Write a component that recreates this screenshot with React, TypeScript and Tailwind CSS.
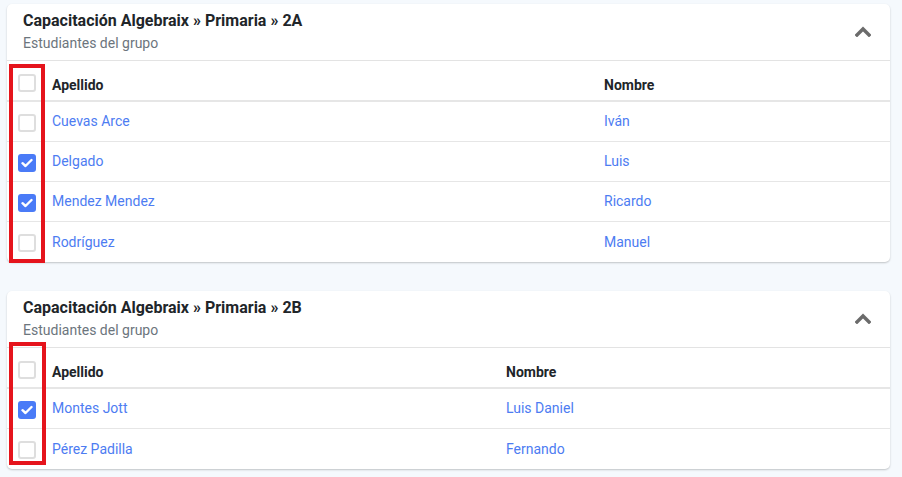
import React from "react";

type Row = { last: string; first: string; checked: boolean };

const groups: { title: string; col2: number; rows: Row[]; box: { top: number; width: number; height: number } }[] = [
  {
    title: "Capacitación Algebraix » Primaria » 2A",
    col2: 552,
    rows: [
      { last: "Cuevas Arce", first: "Iván", checked: false },
      { last: "Delgado", first: "Luis", checked: true },
      { last: "Mendez Mendez", first: "Ricardo", checked: true },
      { last: "Rodríguez", first: "Manuel", checked: false },
    ],
    box: { top: 60, width: 36, height: 199 },
  },
  {
    title: "Capacitación Algebraix » Primaria » 2B",
    col2: 454,
    rows: [
      { last: "Montes Jott", first: "Luis Daniel", checked: true },
      { last: "Pérez Padilla", first: "Fernando", checked: false },
    ],
    box: { top: 51, width: 37, height: 123 },
  },
];

function Checkbox({ checked }: { checked: boolean }) {
  if (checked) {
    return (
      <div className="w-[18px] h-[18px] rounded-[3px] bg-[#4a7bf7] flex items-center justify-center">
        <svg width="12" height="10" viewBox="0 0 12 10">
          <path d="M1.5 5.2 L4.5 8 L10.5 2" fill="none" stroke="white" strokeWidth="2.4" strokeLinecap="round" strokeLinejoin="round" />
        </svg>
      </div>
    );
  }
  return <div className="w-[18px] h-[18px] rounded-[3px] border-2 border-[#dedede] bg-white" />;
}

function Card({ g }: { g: (typeof groups)[number] }) {
  return (
    <div className="relative bg-white rounded-[5px] shadow-[0_1px_2px_rgba(0,0,0,0.22)]">
      <div className="h-[57px] border-b border-[#e3e3e3] flex items-center justify-between pl-4 pr-[19px]">
        <div className="pb-[2px]">
          <div className="text-[16px] leading-6 font-bold text-[#212529]">{g.title}</div>
          <div className="text-[14px] leading-5 text-[#6c757d]">Estudiantes del grupo</div>
        </div>
        <svg width="16" height="12" viewBox="0 0 16 12" className="mb-[2px]">
          <polyline points="2,10 8,4 14,10" fill="none" stroke="#6b6b6b" strokeWidth="3.4" strokeLinecap="square" />
        </svg>
      </div>
      <div
        className="grid h-[41px] border-b-2 border-[#e6e6e6] items-center text-[14px] font-bold text-[#212529]"
        style={{ gridTemplateColumns: `38px ${g.col2}px 1fr` }}
      >
        <div className="pl-[11px] pt-[5px]">
          <Checkbox checked={false} />
        </div>
        <div className="pl-[7px] pt-[10px]">Apellido</div>
        <div className="pl-[7px] pt-[10px]">Nombre</div>
      </div>
      {g.rows.map((r, i) => (
        <div
          key={r.last}
          className={`grid h-[40px] items-center text-[14px] text-[#4d7cf2] ${i < g.rows.length - 1 ? "border-b border-[#e6e6e6]" : ""}`}
          style={{ gridTemplateColumns: `38px ${g.col2}px 1fr` }}
        >
          <div className="pl-[11px] pt-[2px]">
            <Checkbox checked={r.checked} />
          </div>
          <div className="pl-[7px]">{r.last}</div>
          <div className="pl-[7px]">{r.first}</div>
        </div>
      ))}
      <div
        className="absolute left-[2px] border-4 border-[#e5141c] pointer-events-none"
        style={{ top: g.box.top, width: g.box.width, height: g.box.height }}
      />
    </div>
  );
}

export default function App() {
  return (
    <div
      className="min-h-[477px] bg-[#f5f9fd] pt-[4px] pl-[7px] pr-[12px] pb-4 flex flex-col gap-[29px]"
      style={{ fontFamily: "Roboto, 'Noto Sans', sans-serif" }}
    >
      {groups.map((g) => (
        <Card key={g.title} g={g} />
      ))}
    </div>
  );
}
